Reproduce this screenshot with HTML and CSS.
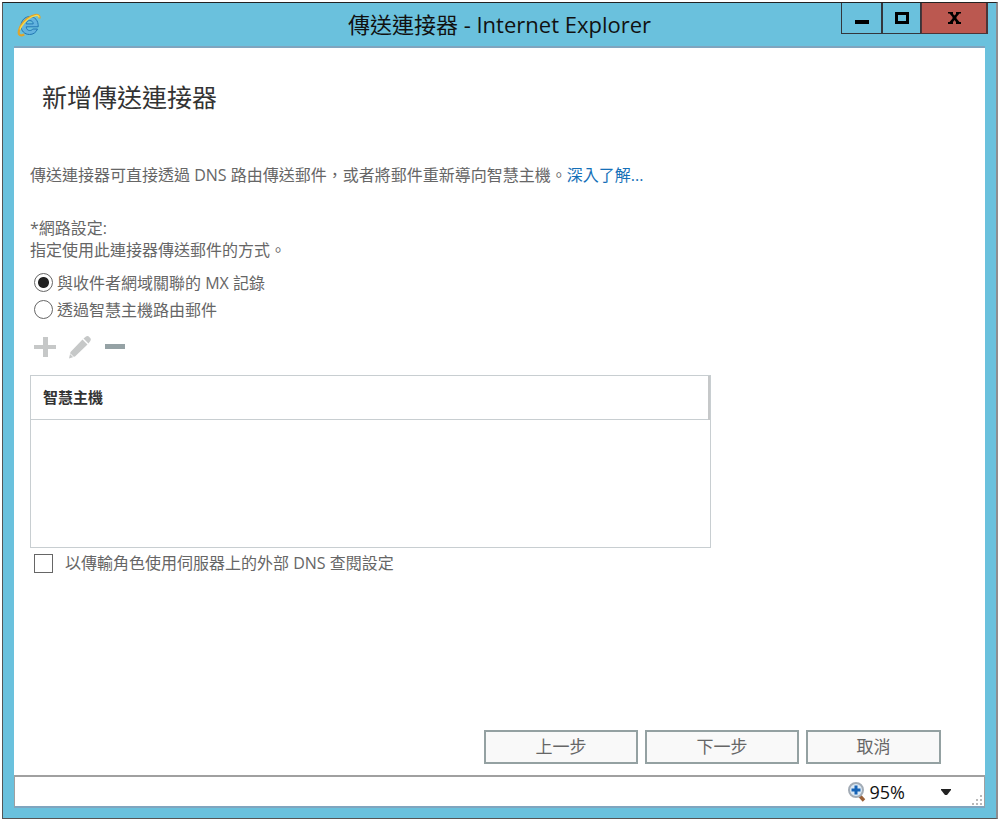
FILE: index.html
```html
<!DOCTYPE html>
<html lang="zh-Hant">
<head>
<meta charset="utf-8">
<meta name="viewport" content="width=device-width, initial-scale=1">
<title>傳送連接器 - Internet Explorer</title>
<link rel="stylesheet" href="styles.css">
</head>
<body>
<div class="window">
  <header class="titlebar">
    <svg class="logo" viewBox="0 0 24 24" aria-hidden="true">
      <path d="M20.500 16C18.900 19.800 16 21.500 12.500 21.500C7.600 21.500 4 17.900 4 12.900C4 7.600 7.800 3.600 12.800 3.600C18 3.600 21.500 7.500 21.200 13.800H9.200C9.400 16.200 10.700 17.500 12.700 17.500C14.200 17.500 15.200 17 15.700 16zM9.200 10.900H16.200C16.100 8.800 14.800 7.600 12.800 7.600C10.800 7.600 9.500 8.800 9.200 10.900z" fill="#63b3df" stroke="#2277b3" stroke-width="1"/>
      <path d="M22.300 5.500C23.300 1.800 20 .700 14.500 3.300C8.500 6.200 3.500 12 2 17.500C.900 21.800 3.200 23.400 7.300 21.600" fill="none" stroke="#e0a42b" stroke-width="2.200"/>
      <path d="M22 4.500C22 1.800 19 1.900 14.500 4C9.500 6.500 4.600 12 3 16.500" fill="none" stroke="#f5dc52" stroke-width="1.200"/>
    </svg>
    <div class="caption">傳送連接器 - Internet Explorer</div>
    <div class="controls">
      <button class="control minimize" type="button" aria-label="最小化">
        <svg width="14" height="18" viewBox="0 0 14 18"><path d="M0 11h14v4H0z"/></svg>
      </button>
      <button class="control maximize" type="button" aria-label="最大化">
        <svg width="14" height="12" viewBox="0 0 14 12"><path d="M0 0h14v12H0zM3 3v6h8V3z" fill-rule="evenodd"/></svg>
      </button>
      <button class="control close" type="button" aria-label="關閉">
        <svg width="13" height="12" viewBox="0 0 13 12"><path d="M0 0H5V2L6.500 3.500L8 2V0H13V1.500H11.500L8.500 5V6.500L11.500 10H13V12H8V10L6.500 8L5 10V12H0V10H1.500L4.500 6.500V5L1.500 1.500H0z"/></svg>
      </button>
    </div>
  </header>

  <main class="page">
    <h1 class="heading">新增傳送連接器</h1>
    <p class="intro">傳送連接器可直接透過 DNS 路由傳送郵件，或者將郵件重新導向智慧主機。<a class="more" href="#">深入了解...</a></p>

    <fieldset class="network">
      <legend class="legend">*網路設定:</legend>
      <p class="hint">指定使用此連接器傳送郵件的方式。</p>
      <label class="option"><input class="radio" type="radio" name="route" checked><span>與收件者網域關聯的 MX 記錄</span></label>
      <label class="option"><input class="radio" type="radio" name="route"><span>透過智慧主機路由郵件</span></label>
    </fieldset>

    <div class="toolbar">
      <button class="tool" type="button" aria-label="新增">
        <svg viewBox="0 0 24 24"><path d="M10 2h5v8h8v4h-8v8h-5v-8H1v-4h9z" fill="#c6c8c8"/></svg>
      </button>
      <button class="tool" type="button" aria-label="編輯">
        <svg viewBox="0 0 24 24"><path d="M2.500 17L14.500 4.500L19.500 9.500L7 21.500L1 23.500zM15.500 3.500L18 1.500Q19 .800 20.500 1.300L22.500 3.300Q23.300 4.800 22.300 6L20.500 8.500z" fill="#c6c8c8"/><path d="M2 18.500L5.500 22" stroke="#fff"/></svg>
      </button>
      <button class="tool" type="button" aria-label="移除">
        <svg viewBox="0 0 24 24"><path d="M2 9h20v5H2z" fill="#95a2a5"/></svg>
      </button>
    </div>

    <div class="list">
      <table class="hosts">
        <thead><tr><th class="host-head" scope="col">智慧主機</th></tr></thead>
        <tbody></tbody>
      </table>
    </div>

    <label class="dns"><input class="check" type="checkbox"><span>以傳輸角色使用伺服器上的外部 DNS 查閱設定</span></label>

    <div class="actions">
      <button class="action" type="button">上一步</button>
      <button class="action" type="button">下一步</button>
      <button class="action cancel" type="button">取消</button>
    </div>
  </main>

  <footer class="status">
    <button class="zoom" type="button">
      <svg width="18" height="20" viewBox="0 0 18 20" aria-hidden="true">
        <path d="M11 13L16 18.500" stroke="#9a6038" stroke-width="3.400"/>
        <circle cx="8" cy="8" r="7" fill="#dbe9f5" stroke="#a3acb6" stroke-width="2"/>
        <path d="M6.500 3.500h3v3h3v3h-3v3h-3v-3h-3v-3h3z" fill="#1763b5"/>
      </svg>
      <span class="percent">95%</span>
      <svg class="arrow" width="10" height="6" viewBox="0 0 10 6" aria-hidden="true"><path d="M0 0h10v1L6 6H4L0 1z" fill="#222"/></svg>
    </button>
    <svg class="grip" width="12" height="12" viewBox="0 0 12 12" aria-hidden="true"><path d="M9 1h2v2H9zM9 5h2v2H9zM9 9h2v2H9zM5 5h2v2H5zM5 9h2v2H5zM1 9h2v2H1z" fill="#b9b9b9"/></svg>
  </footer>
</div>
</body>
</html>
```
FILE: styles.css
```css
* { box-sizing: border-box; }

body {
  margin: 0;
  background: #fff;
  color: #666;
  font: 16px/22px "Open Sans", "Noto Sans CJK TC", sans-serif;
}

button, input { font: inherit; margin: 0; }
p { margin: 0; }

.window {
  display: flex;
  flex-direction: column;
  min-height: calc(100vh - 6px);
  margin: 2px 3px 4px 2px;
  padding: 0 11px 10px;
  background: #6ac1dd;
  border: 1px solid #555;
  border-top-color: #222;
  border-right: 2px solid #8d8d90;
}

.titlebar {
  display: grid;
  grid-template-columns: 1fr auto 1fr;
  align-items: start;
  height: 45px;
  border-bottom: 2px solid #7fa5bf;
}

.logo { width: 24px; height: 24px; margin: 10px 3px; }

.caption {
  color: #111;
  font-size: 22px;
  line-height: 43px;
}

.controls {
  display: flex;
  justify-self: end;
  margin-right: -3px;
}

.control {
  display: flex;
  align-items: center;
  justify-content: center;
  width: 39px;
  height: 31px;
  padding: 0;
  background: #6ac1dd;
  border: solid #33363c;
  border-width: 0 1px 1px;
}

.minimize { width: 41px; }
.close { width: 67px; background: #bb5850; border-color: #4c3437; border-right-width: 2px; }

.page {
  display: flex;
  flex: 1;
  flex-direction: column;
  padding: 33px 16px 11px;
  background: #fff;
}

.heading {
  margin: 0 0 51px;
  padding-left: 12px;
  color: #333;
  font-size: 25px;
  font-weight: 400;
  line-height: 32px;
}

.more { color: #1570b8; text-decoration: none; }

.network { margin: 31px 0 0; padding: 0; border: 0; }
.legend { padding: 0; }
.hint { margin-bottom: 8px; }

.option, .dns { display: flex; align-items: center; }
.option { gap: 4px; height: 27px; padding-left: 4px; }

.radio, .check {
  appearance: none;
  flex: none;
  width: 19px;
  height: 19px;
  background: #fff;
  border: 1px solid #666;
}

.radio { border-radius: 50%; }
.radio:checked { background: radial-gradient(circle, #222 5px, #fff 6px); }

.toolbar { display: flex; gap: 11px; margin: 12px 0 16px 3px; }
.tool { width: 24px; height: 24px; padding: 0; background: none; border: 0; }
.tool svg { display: block; }

.list {
  width: 100%;
  max-width: 681px;
  min-height: 173px;
  border: 1px solid #c8ced1;
}

.hosts { width: 100%; border-collapse: collapse; }

.host-head {
  height: 43px;
  padding: 0 12px;
  border-right: 2px solid #c6c8c9;
  border-bottom: 1px solid #c8ced1;
  color: #333;
  font-size: 15px;
  font-weight: 700;
  text-align: left;
}

.dns { gap: 12px; margin-top: 4px; padding-left: 4px; }

.actions {
  display: flex;
  justify-content: flex-end;
  gap: 7px;
  margin-top: auto;
  padding-right: 28px;
}

.action {
  width: 154px;
  height: 34px;
  padding: 0;
  background: #f9f9f9;
  border: 2px solid #94a1a2;
  color: #666;
  font-size: 17px;
}

.cancel { width: 135px; }

.status {
  display: flex;
  align-items: center;
  justify-content: flex-end;
  gap: 20px;
  height: 33px;
  background: #fff;
  border: 1px solid #a0a0a0;
  border-width: 2px 1px;
  border-bottom-color: #7fa5bf;
}

.zoom {
  display: flex;
  align-items: center;
  padding: 0;
  background: none;
  border: 0;
  color: #111;
}

.percent { margin: 0 36px 0 4px; font-size: 18px; }
.grip { align-self: flex-end; margin-right: 1px; }
```
